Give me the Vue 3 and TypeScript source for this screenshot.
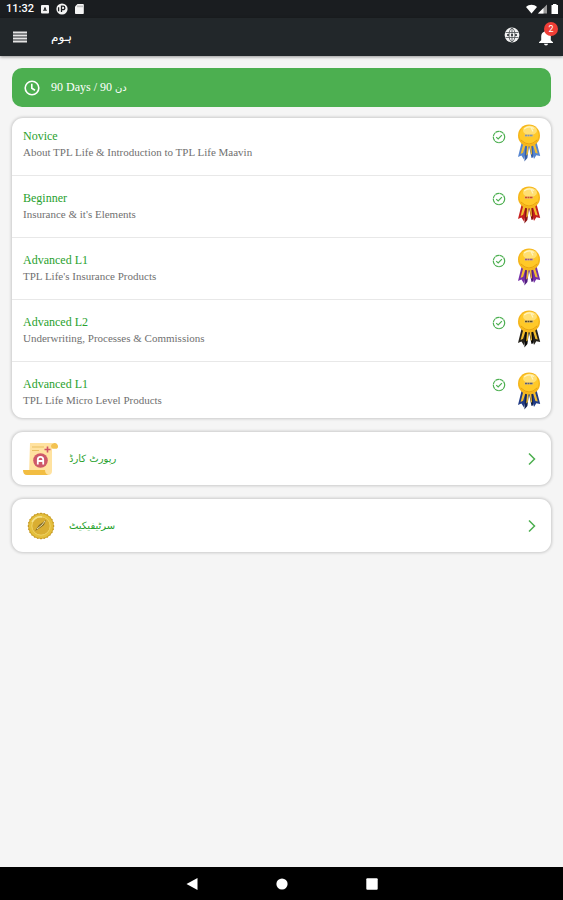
<script setup lang="ts">
interface Level {
  id: number
  title: string
  topic: string
  ribbon: string
  shade: string
}

const levels: Level[] = [
  { id: 1, title: 'Novice', topic: 'About TPL Life & Introduction to TPL Life Maavin', ribbon: '#5585d0', shade: '#365fa8' },
  { id: 2, title: 'Beginner', topic: "Insurance & it's Elements", ribbon: '#c62020', shade: '#8c1212' },
  { id: 3, title: 'Advanced L1', topic: "TPL Life's Insurance Products", ribbon: '#7630a8', shade: '#511b80' },
  { id: 4, title: 'Advanced L2', topic: 'Underwriting, Processes & Commissions', ribbon: '#25221c', shade: '#080808' },
  { id: 5, title: 'Advanced L1', topic: 'TPL Life Micro Level Products', ribbon: '#213c86', shade: '#112250' },
]

const notifications = 2

// Points of a scalloped seal outline around the given centre.
function seal(cx: number, cy: number, outer: number, inner: number, teeth: number): string {
  const points: string[] = []
  for (let i = 0; i < teeth * 2; i++) {
    const r = i % 2 ? inner : outer
    const a = (i * Math.PI) / teeth
    points.push(`${(cx + r * Math.cos(a)).toFixed(2)},${(cy + r * Math.sin(a)).toFixed(2)}`)
  }
  return points.join(' ')
}

const coinEdge = seal(14, 14, 13.5, 12.6, 24)
</script>

<template>
  <div class="screen">
    <div class="status">
      <span class="time">11:32</span>
      <svg class="glyph" viewBox="0 0 12 12" aria-hidden="true">
        <rect x="2" y="2" width="8" height="8.500" rx="1" fill="#f4f4f4" />
        <path d="M4.700 8 6 4.500 7.300 8M5 7h2" stroke="#1b1f21" fill="none" />
      </svg>
      <svg class="glyph" viewBox="0 0 12 12" aria-hidden="true">
        <circle cx="6" cy="6" r="5.600" fill="#f4f4f4" />
        <path d="M5.500 9V3.200h1.600a1.700 1.700 0 0 1 0 3.500H5.500M2.600 4.200v4" stroke="#1b1f21" stroke-width="1.300" fill="none" />
      </svg>
      <svg class="glyph" viewBox="0 0 12 12" aria-hidden="true">
        <path d="M4.500 1H10a.8.8 0 0 1 .8.8v8.400a.8.8 0 0 1-.8.8H2.800a.8.8 0 0 1-.8-.8V3.500z" fill="#f4f4f4" />
        <path d="M5 2.500v1.700M7 2.500v1.700M9 2.500v1.700" stroke="#777" stroke-width=".8" />
      </svg>
      <svg class="signals" viewBox="0 0 34 12" aria-hidden="true">
        <path d="M1 4C4 1 9 1 12 4L6.500 10.500z" fill="#fff" />
        <path d="M13 10.500 22 1.500v9z" fill="#999" />
        <path d="M13 10.500 18.500 5v5.500z" fill="#fff" />
        <path d="M26.500 2H28V1h3.500v1H33v9h-6.500z" fill="#fff" />
      </svg>
    </div>

    <header class="appbar">
      <button class="icon-button" type="button" aria-label="Menu">
        <svg width="16" height="12" viewBox="0 0 16 12"><path d="M1 1.500h14M1 4.500h14M1 7.500h14M1 10.500h14" stroke="#e4e4e4" stroke-width="2" /></svg>
      </button>
      <h1 lang="ur">ہوم</h1>
      <button class="icon-button language" type="button" aria-label="Language">
        <svg width="16" height="16" viewBox="0 0 16 16">
          <circle cx="8" cy="8" r="7.400" fill="#f2f2f2" />
          <g fill="none" stroke="#4a4f52" stroke-width=".8">
            <ellipse cx="8" cy="8" rx="3" ry="6.700" />
            <path d="M1.500 5.500h13M1.500 10.500h13M8 1v14" />
          </g>
          <path d="M3 8h2M7 8h2M11 8h2" stroke="#22272a" stroke-width="1.500" />
        </svg>
      </button>
      <button class="icon-button" type="button" aria-label="Notifications">
        <svg width="16" height="17" viewBox="0 0 16 17">
          <path d="M8 1.200c.8 0 1.300.5 1.300 1.200 2.300.7 3.500 2.500 3.500 4.900v3.900l2.200 2v.8H1v-.8l2.200-2V7.300c0-2.400 1.200-4.200 3.500-4.900 0-.7.500-1.200 1.300-1.200zM6 14.800h4a2 1.800 0 0 1-4 0z" fill="#fff" />
        </svg>
        <span class="badge">{{ notifications }}</span>
      </button>
    </header>

    <main>
      <section class="duration">
        <svg width="16" height="16" viewBox="0 0 16 16" fill="none" stroke="#fff" stroke-width="1.600" aria-hidden="true">
          <circle cx="8" cy="8" r="6.800" /><path d="M7.800 3.800v4.400l3.200 2" />
        </svg>
        <span>90 Days / 90 <span class="urdu-unit" lang="ur">دن</span></span>
      </section>

      <ul class="card levels">
        <li v-for="level in levels" :key="level.id">
          <div class="level-text">
            <h2>{{ level.title }}</h2>
            <p>{{ level.topic }}</p>
          </div>
          <svg class="check" viewBox="0 0 14 14" fill="none" stroke="#4caf50" role="img" aria-label="Completed">
            <circle cx="7" cy="7" r="5.700" stroke-width="1.200" stroke-dasharray="4.100 .377" />
            <path d="m4.200 7.100 2 1.900 3.700-3.800" stroke-width="1.200" />
          </svg>
          <svg class="medal" viewBox="0 0 24 38" aria-hidden="true">
            <path d="M4.500 19 1 33l3.400-1.600L7 35.500 11 20z" :fill="level.ribbon" />
            <path d="M13 20 17 35l2.300-3.700 3.900.8L19.500 18z" :fill="level.ribbon" />
            <path d="M8.500 20 7.400 37.500l3-3.500L12 22zM12 22l2.500 12 1.800-.8L15.500 20z" :fill="level.shade" />
            <path d="M6.200 20 3.600 30l2.500-1.200L8.800 20zM15.700 20l2.700 9 2.400.6L18 20zM10 22l-.8 9.500 1.600-1.300L11.500 22zM12.700 22l1.300 8.800 1-.9L14.300 22z" fill="#f2bd2e" />
            <circle cx="12" cy="11.500" r="11" fill="#f5b51b" />
            <circle cx="12" cy="11" r="9.600" fill="#ffc928" />
            <ellipse cx="13" cy="6.500" rx="7" ry="4.700" fill="#ffdf72" />
            <path d="M7 5q5-4 10-.5M14 3.500l2 4" fill="none" stroke="#fff3be" stroke-width="1.200" />
            <path d="M4 16q8 8 16 0" fill="none" stroke="#e7a20f" />
            <rect x="7.500" y="10.200" width="9" height="2.600" fill="#eac56a" />
            <path d="M8 11.500h8" :stroke="level.ribbon" stroke-width="1.300" stroke-dasharray="2 .5" opacity=".75" />
          </svg>
        </li>
      </ul>

      <a class="card link" href="#report-card">
        <span class="picture">
          <svg width="36" height="34" viewBox="0 0 36 34" aria-hidden="true">
            <path d="M7 1h23a3 3 0 0 0-1 3v25a4 4 0 0 1-4 4H6z" fill="#ffe2a0" />
            <path d="M28 4.500a3.500 3.500 0 1 1 6.800 1.200c-.8 1.500-3.800 1.300-5.800.8z" fill="#f3c251" />
            <path d="M0 28h22q0 4 3.500 5H4q-4 0-4-5z" fill="#f2bd42" />
            <path d="M9 5h12M9 8.500h7" stroke="#e9bf62" />
            <path d="M24.500 4.500v6M21.500 7.500h6" stroke="#cf5366" stroke-width="1.600" />
            <circle cx="17.500" cy="18.500" r="7.300" fill="#ce5969" />
            <path d="M14.800 22.500v-5a2.700 2.700 0 0 1 5.400 0v5M14.800 19h5.400" fill="none" stroke="#fff" stroke-width="1.800" />
          </svg>
        </span>
        <span class="label" lang="ur" dir="rtl">رپورٹ کارڈ</span>
        <svg class="chevron" viewBox="0 0 8 14" aria-hidden="true"><path d="m1 1.500 5.500 5.500L1 12.500" /></svg>
      </a>

      <a class="card link" href="#certificate">
        <span class="picture">
          <svg width="28" height="28" viewBox="0 0 28 28" aria-hidden="true">
            <polygon :points="coinEdge" fill="#c99c22" />
            <circle cx="14" cy="14" r="12" fill="#e4bf3c" />
            <circle cx="14" cy="14" r="9.200" fill="#d9ae32" stroke="#f0d468" />
            <path d="M5 10q4-6 10-5" fill="none" stroke="#f5e18c" stroke-width="1.500" />
            <path d="m8 19 4-6 7-5-2 5-4 3z" fill="#806a28" />
            <path d="m10 17 5-4 3-4" stroke="#efe0a0" fill="none" />
          </svg>
        </span>
        <span class="label" lang="ur" dir="rtl">سرٹیفیکیٹ</span>
        <svg class="chevron" viewBox="0 0 8 14" aria-hidden="true"><path d="m1 1.500 5.500 5.500L1 12.500" /></svg>
      </a>
    </main>

    <nav class="system-nav" aria-label="System">
      <button type="button" aria-label="Back"><svg viewBox="0 0 12 12"><path d="M11.500 0v12L.5 6z" /></svg></button>
      <button type="button" aria-label="Home"><svg viewBox="0 0 12 12"><circle cx="6" cy="6" r="5.600" /></svg></button>
      <button type="button" aria-label="Recent apps"><svg viewBox="0 0 12 12"><rect x=".3" y=".3" width="11.400" height="11.400" rx="1" /></svg></button>
    </nav>
  </div>
</template>

<style>
body {
  margin: 0;
  background: #f5f5f5;
}
</style>

<style scoped>
.screen {
  display: flex;
  flex-direction: column;
  min-height: 100vh;
  font-family: "Liberation Serif", "DejaVu Sans", serif;
  background: #f5f5f5;
}
svg {
  display: block;
  flex: none;
}
h1, h2, p, ul {
  margin: 0;
  padding: 0;
  font-weight: 400;
}
button {
  border: 0;
  padding: 0;
  background: none;
}
.status {
  display: flex;
  align-items: center;
  gap: 5px;
  height: 18px;
  padding: 0 4px 0 6px;
  background: #1a1d20;
  color: #fff;
}
.time {
  width: 28px;
  font: 500 11px/18px Roboto, sans-serif;
}
.glyph {
  width: 12px;
  height: 12px;
}
.signals {
  width: 34px;
  height: 12px;
  margin-left: auto;
}
.appbar {
  display: flex;
  align-items: center;
  height: 38px;
  padding: 0 9px 0 12px;
  background: #22272a;
  box-shadow: 0 1px 3px #0006;
}
.icon-button {
  position: relative;
  display: grid;
  place-items: center;
  min-width: 16px;
  height: 32px;
}
.appbar h1 {
  flex: 1;
  padding-left: 23px;
  color: #fff;
  font: 12px/20px "DejaVu Sans", sans-serif;
}
.language {
  margin-right: 18px;
  padding-bottom: 4px;
}
.badge {
  position: absolute;
  top: 1px;
  right: -4px;
  width: 14px;
  height: 14px;
  border-radius: 50%;
  background: #ef3e36;
  color: #fff;
  font: 9px/14px Roboto, sans-serif;
  text-align: center;
}
main {
  flex: 1;
  display: flex;
  flex-direction: column;
  gap: 14px;
  padding: 12px;
}
.duration {
  display: flex;
  align-items: center;
  gap: 11px;
  height: 39px;
  padding: 0 12px;
  margin-bottom: -3px;
  border-radius: 10px;
  background: #4caf50;
  color: #fff;
  font-size: 12px;
  line-height: 16px;
}
.urdu-unit {
  font-family: "DejaVu Sans", sans-serif;
  font-size: 10px;
}
.card {
  border-radius: 11px;
  background: #fff;
  box-shadow: 0 0 3px 1px #0000002e;
}
.levels li {
  display: flex;
  align-items: flex-start;
  box-sizing: border-box;
  min-height: 62px;
  padding: 14px 10px 0 11px;
  border-top: 1px solid #e8e8e8;
}
.levels li:first-child {
  min-height: 57px;
  padding-top: 10px;
  border-top: 0;
}
.levels li:last-child {
  min-height: 57px;
}
.level-text {
  flex: 1;
}
.level-text h2 {
  color: #28a12d;
  font-size: 12px;
  line-height: 16px;
}
.level-text p {
  color: #707070;
  font-size: 11px;
  line-height: 16px;
}
.check {
  width: 14px;
  height: 14px;
  margin: 2px 11px 0 0;
}
.medal {
  width: 24px;
  height: 38px;
  margin-top: -4px;
}
.link {
  display: flex;
  align-items: center;
  height: 53px;
  padding: 0 15px 0 11px;
  color: #28a12d;
  text-decoration: none;
}
.picture {
  display: grid;
  place-items: center;
  width: 36px;
}
.label {
  margin: 0 auto 0 10px;
  font: 10px/20px "DejaVu Sans", sans-serif;
}
.chevron {
  width: 8px;
  height: 14px;
  fill: none;
  stroke: #4caf50;
  stroke-width: 1.5;
}
.system-nav {
  display: flex;
  align-items: center;
  justify-content: center;
  gap: 78px;
  height: 33px;
  background: #000;
}
.system-nav svg {
  width: 12px;
  height: 12px;
  fill: #fff;
}
</style>
